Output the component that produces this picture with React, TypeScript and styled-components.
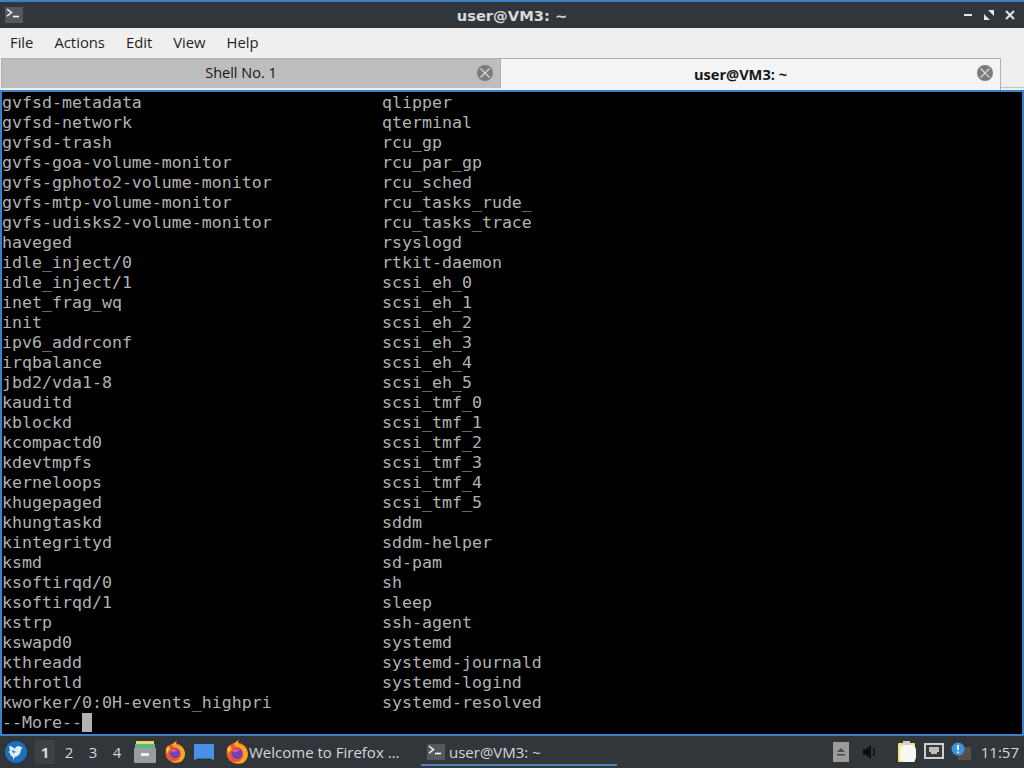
import { Fragment } from "react";
import styled, { createGlobalStyle } from "styled-components";

const GlobalStyle = createGlobalStyle`
	html, body {
		margin: 0;
		padding: 0;
		background: #31363b;
	}
	* {
		box-sizing: border-box;
	}
`;

const Desktop = styled.div`
	width: 1024px;
	height: 768px;
	display: flex;
	flex-direction: column;
	overflow: hidden;
	font-family: "Open Sans", "Noto Sans", sans-serif;
`;

const TitleBar = styled.div`
	height: 28px;
	flex: none;
	display: flex;
	align-items: center;
	justify-content: space-between;
	padding: 0 8px 0 5px;
	background: #31363b;
	border-top: 2px solid #3d80c6;
`;

const WindowIcon = styled.div`
	width: 18px;
	height: 16px;
	display: flex;
`;

const WindowTitle = styled.div`
	font-family: "DejaVu Sans", sans-serif;
	font-size: 14.7px;
	font-weight: 700;
	color: #d8d9da;
	margin-left: 39px;
`;

const WindowButtons = styled.div`
	display: flex;
	align-items: center;
	gap: 9px;
`;

const MenuBar = styled.div`
	height: 30px;
	flex: none;
	display: flex;
	align-items: center;
	gap: 21px;
	padding: 0 0 2px 10px;
	background: #efefef;
`;

const MenuItem = styled.span`
	font-size: 14.8px;
	color: #1f1f1f;
`;

const TabBar = styled.div`
	height: 32px;
	flex: none;
	display: flex;
	align-items: flex-start;
	background: #efefef;
	padding-left: 1px;
`;

const Tab = styled.div<{ $active?: boolean }>`
	position: relative;
	width: 500px;
	height: ${p => (p.$active ? 32 : 30)}px;
	display: flex;
	align-items: center;
	justify-content: center;
	padding-bottom: 2px;
	padding-right: 20px;
	font-size: ${p => (p.$active ? 14.6 : 14.5)}px;
	color: #161616;
	font-weight: ${p => (p.$active ? 700 : 400)};
	background: ${p => (p.$active ? "#f4f4f4" : "#bdbdbd")};
	border: 1px solid #b0b0b0;
	border-bottom: none;
	border-left: ${p => (p.$active ? "none" : "1px solid #b0b0b0")};
`;

const TabClose = styled.span`
	position: absolute;
	top: 6px;
	right: 7px;
	width: 16px;
	height: 16px;
`;

const TabFiller = styled.div`
	flex: 1;
	height: 30px;
	border-bottom: 1px solid #c4c4c4;
`;

const Terminal = styled.div`
	height: 646px;
	flex: none;
	background: #000;
	border: 2px solid #3d80c6;
	overflow: hidden;
`;

const Listing = styled.div`
	display: grid;
	grid-template-columns: 380px 1fr;
	grid-auto-rows: 20px;
	padding-top: 1px;
	font-family: "DejaVu Sans Mono", monospace;
	font-size: 16.6px;
	line-height: 20px;
	color: #b2b2b2;
	white-space: pre;
`;

const Prompt = styled.div`
	display: flex;
	grid-column: 1 / 3;
`;

const Cursor = styled.span`
	width: 10px;
	height: 19px;
	background: #b2b2b2;
`;

const TaskBar = styled.div`
	height: 32px;
	flex: none;
	display: flex;
	align-items: center;
	padding: 0 5px;
	background: #31363b;
	color: #d6d7d8;
`;

const Pager = styled.div`
	display: flex;
	gap: 4px;
	margin-left: 8px;
`;

const Desk = styled.div<{ $active?: boolean }>`
	width: 20px;
	height: 24px;
	display: flex;
	align-items: center;
	justify-content: center;
	font-size: 15px;
	font-weight: ${p => (p.$active ? 700 : 400)};
	background: ${p => (p.$active ? "#3c4146" : "transparent")};
	border-radius: 2px;
`;

const QuickLaunch = styled.div`
	display: flex;
	align-items: center;
	gap: 8px;
	margin-left: 7px;
`;

const TaskList = styled.div`
	display: flex;
	margin-left: 5px;
`;

const TaskButton = styled.div<{ $active?: boolean; $width: number; $gap: number }>`
	position: relative;
	width: ${p => p.$width}px;
	height: 32px;
	display: flex;
	align-items: center;
	gap: ${p => p.$gap}px;
	padding-left: 6px;
	font-size: 15px;
	color: #d6d7d8;
	white-space: nowrap;
	${p =>
		p.$active &&
		`&::after {
			content: "";
			position: absolute;
			left: 0;
			right: 0;
			bottom: 2px;
			height: 2px;
			background: #4d80bd;
		}`}
`;

const Tray = styled.div`
	margin-left: auto;
	display: flex;
	align-items: center;
`;

const TrayIcon = styled.span<{ $gap: number }>`
	display: flex;
	margin-left: ${p => p.$gap}px;
`;

const Clock = styled.span`
	font-size: 15px;
	margin-left: 10px;
`;

const rows: [string, string][] = [
	["gvfsd-metadata", "qlipper"],
	["gvfsd-network", "qterminal"],
	["gvfsd-trash", "rcu_gp"],
	["gvfs-goa-volume-monitor", "rcu_par_gp"],
	["gvfs-gphoto2-volume-monitor", "rcu_sched"],
	["gvfs-mtp-volume-monitor", "rcu_tasks_rude_"],
	["gvfs-udisks2-volume-monitor", "rcu_tasks_trace"],
	["haveged", "rsyslogd"],
	["idle_inject/0", "rtkit-daemon"],
	["idle_inject/1", "scsi_eh_0"],
	["inet_frag_wq", "scsi_eh_1"],
	["init", "scsi_eh_2"],
	["ipv6_addrconf", "scsi_eh_3"],
	["irqbalance", "scsi_eh_4"],
	["jbd2/vda1-8", "scsi_eh_5"],
	["kauditd", "scsi_tmf_0"],
	["kblockd", "scsi_tmf_1"],
	["kcompactd0", "scsi_tmf_2"],
	["kdevtmpfs", "scsi_tmf_3"],
	["kerneloops", "scsi_tmf_4"],
	["khugepaged", "scsi_tmf_5"],
	["khungtaskd", "sddm"],
	["kintegrityd", "sddm-helper"],
	["ksmd", "sd-pam"],
	["ksoftirqd/0", "sh"],
	["ksoftirqd/1", "sleep"],
	["kstrp", "ssh-agent"],
	["kswapd0", "systemd"],
	["kthreadd", "systemd-journald"],
	["kthrotld", "systemd-logind"],
	["kworker/0:0H-events_highpri", "systemd-resolved"],
];

function TermGlyph({ size = 18 }: { size?: number }) {
	return (
		<svg width={size} height={size * 0.89} viewBox="0 0 18 16">
			<rect width="18" height="16" fill="#55595c" />
			<path d="M2 2l4.5 3.5L2 9" fill="none" stroke="#e8e8e8" strokeWidth="1.6" />
			<path d="M8 9.5h6" stroke="#fff" strokeWidth="1.6" />
		</svg>
	);
}

function CloseBadge() {
	return (
		<svg width="16" height="16" viewBox="0 0 16 16">
			<circle cx="8" cy="8" r="8" fill="#7c7c7c" />
			<path d="M3.5 3.5l9 9M12.5 3.5l-9 9" stroke="#d8d8d8" strokeWidth="1.2" />
		</svg>
	);
}

function FirefoxIcon({ size }: { size: number }) {
	return (
		<svg width={size} height={size} viewBox="0 0 24 24">
			<circle cx="12" cy="13" r="10.5" fill="#f4572f" />
			<path d="M14 0c-1 2-1 3 0 4 5 1 9 5 9 10 0 4-2 7-5 9-3 1-8 1-11-1 5 1 10-1 11-6 1-4-1-8-5-9-2 0-3-1-4-3 1-2 3-3 5-4z" fill="#fba61f" />
			<path d="M2 9c1-2 2-3 3-4 0 2 1 3 2 4-2 1-3 3-3 5-1-1-2-3-2-5z" fill="#fcc12e" />
			<circle cx="12" cy="13.5" r="5.5" fill="#7343b5" />
			<path d="M6.500 11c2-2 6-3 9 0-2-1-3 0-4 1-2 .5-3 0-5-1z" fill="#f2557a" />
		</svg>
	);
}

export default function App() {
	return (
		<>
			<GlobalStyle />
			<Desktop>
				<TitleBar>
					<WindowIcon>
						<TermGlyph />
					</WindowIcon>
					<WindowTitle>user@VM3: ~</WindowTitle>
					<WindowButtons>
						<svg width="12" height="12" viewBox="0 0 12 12">
							<path d="M2 6h8" stroke="#e6e6e6" strokeWidth="2" />
						</svg>
						<svg width="12" height="12" viewBox="0 0 12 12">
							<path d="M5 1h6v6zM1 5v6h6z" fill="#e6e6e6" />
						</svg>
						<svg width="12" height="12" viewBox="0 0 12 12">
							<path d="M2 2l8 8M10 2l-8 8" stroke="#e6e6e6" strokeWidth="2" />
						</svg>
					</WindowButtons>
				</TitleBar>
				<MenuBar>
					<MenuItem>File</MenuItem>
					<MenuItem>Actions</MenuItem>
					<MenuItem>Edit</MenuItem>
					<MenuItem>View</MenuItem>
					<MenuItem>Help</MenuItem>
				</MenuBar>
				<TabBar>
					<Tab>
						Shell No. 1
						<TabClose>
							<CloseBadge />
						</TabClose>
					</Tab>
					<Tab $active>
						user@VM3: ~
						<TabClose>
							<CloseBadge />
						</TabClose>
					</Tab>
					<TabFiller />
				</TabBar>
				<Terminal>
					<Listing>
						{rows.map(([left, right]) => (
							<Fragment key={left}>
								<div>{left}</div>
								<div>{right}</div>
							</Fragment>
						))}
						<Prompt>
							--More--
							<Cursor />
						</Prompt>
					</Listing>
				</Terminal>
				<TaskBar>
					<svg width="22" height="22" viewBox="0 0 22 22">
						<circle cx="11" cy="11" r="11" fill="#1c6fc0" />
						<path d="M4 5c3 0 5 2 6 3 0-2 2-3 4-3l4 2-2 1c0 4-2 7-6 8l-2 3 0-3c-2-1-3-2-3-4l-2-1 2-1z" fill="#dfeaf6" />
						<path d="M7 9l4 2-3 1z" fill="#1c6fc0" />
					</svg>
					<Pager>
						<Desk $active>1</Desk>
						<Desk>2</Desk>
						<Desk>3</Desk>
						<Desk>4</Desk>
					</Pager>
					<QuickLaunch>
						<svg width="22" height="22" viewBox="0 0 22 22">
							<rect x="2" y="0" width="18" height="4" fill="#e9d66b" />
							<rect x="1" y="3" width="20" height="5" fill="#5cb58a" />
							<rect x="0" y="7" width="22" height="15" rx="1" fill="#9a9d9e" />
							<rect x="7" y="12" width="8" height="3" fill="#efefef" />
						</svg>
						<FirefoxIcon size={22} />
						<svg width="20" height="17" viewBox="0 0 20 17">
							<path d="M0 0h20v16l-4-1.500H4L0 16z" fill="#4a90e6" />
						</svg>
					</QuickLaunch>
					<TaskList>
						<TaskButton $width={202} $gap={0}>
							<FirefoxIcon size={24} />
							Welcome to Firefox …
						</TaskButton>
						<TaskButton $active $width={196} $gap={4}>
							<TermGlyph />
							user@VM3: ~
						</TaskButton>
					</TaskList>
					<Tray>
						<TrayIcon $gap={0}>
							<svg width="16" height="20" viewBox="0 0 16 20">
								<rect width="16" height="20" fill="#9b9b9b" />
								<path d="M8 6l4 4H4zM4 12h8v1.500H4z" fill="#4a4a4a" />
							</svg>
						</TrayIcon>
						<TrayIcon $gap={12}>
							<svg width="18" height="18" viewBox="0 0 18 18">
								<path d="M2 6h3l5-4v14l-5-4H2z" fill="#0d0d0d" />
								<path d="M12 5c2 2 2 6 0 8" stroke="#0d0d0d" strokeWidth="1.500" fill="none" />
							</svg>
						</TrayIcon>
						<TrayIcon $gap={18}>
							<svg width="20" height="22" viewBox="0 0 20 22">
								<rect x="1" y="2" width="17" height="19" rx="1" fill="#f3e77c" />
								<rect x="3" y="4" width="16" height="17" rx="5" fill="#f7f7f4" />
								<rect x="6" y="0" width="7" height="4" fill="#cfcfcf" />
							</svg>
						</TrayIcon>
						<TrayIcon $gap={7}>
							<svg width="20" height="18" viewBox="0 0 20 18">
								<rect x="1" y="1" width="18" height="14" fill="#3a3a3a" stroke="#cfcfcf" strokeWidth="2" />
								<path d="M5 4h10v5h-2v2H7V9H5z" fill="#bdbdbd" />
							</svg>
						</TrayIcon>
						<TrayIcon $gap={7}>
							<svg width="20" height="20" viewBox="0 0 20 20">
								<rect x="7" y="5" width="13" height="13" fill="#55504c" />
								<circle cx="7" cy="7" r="6.500" fill="#3f93dd" />
								<path d="M7 3v5M7 9.500v1.500" stroke="#fff" strokeWidth="1.800" />
							</svg>
						</TrayIcon>
						<Clock>11:57</Clock>
					</Tray>
				</TaskBar>
			</Desktop>
		</>
	);
}
